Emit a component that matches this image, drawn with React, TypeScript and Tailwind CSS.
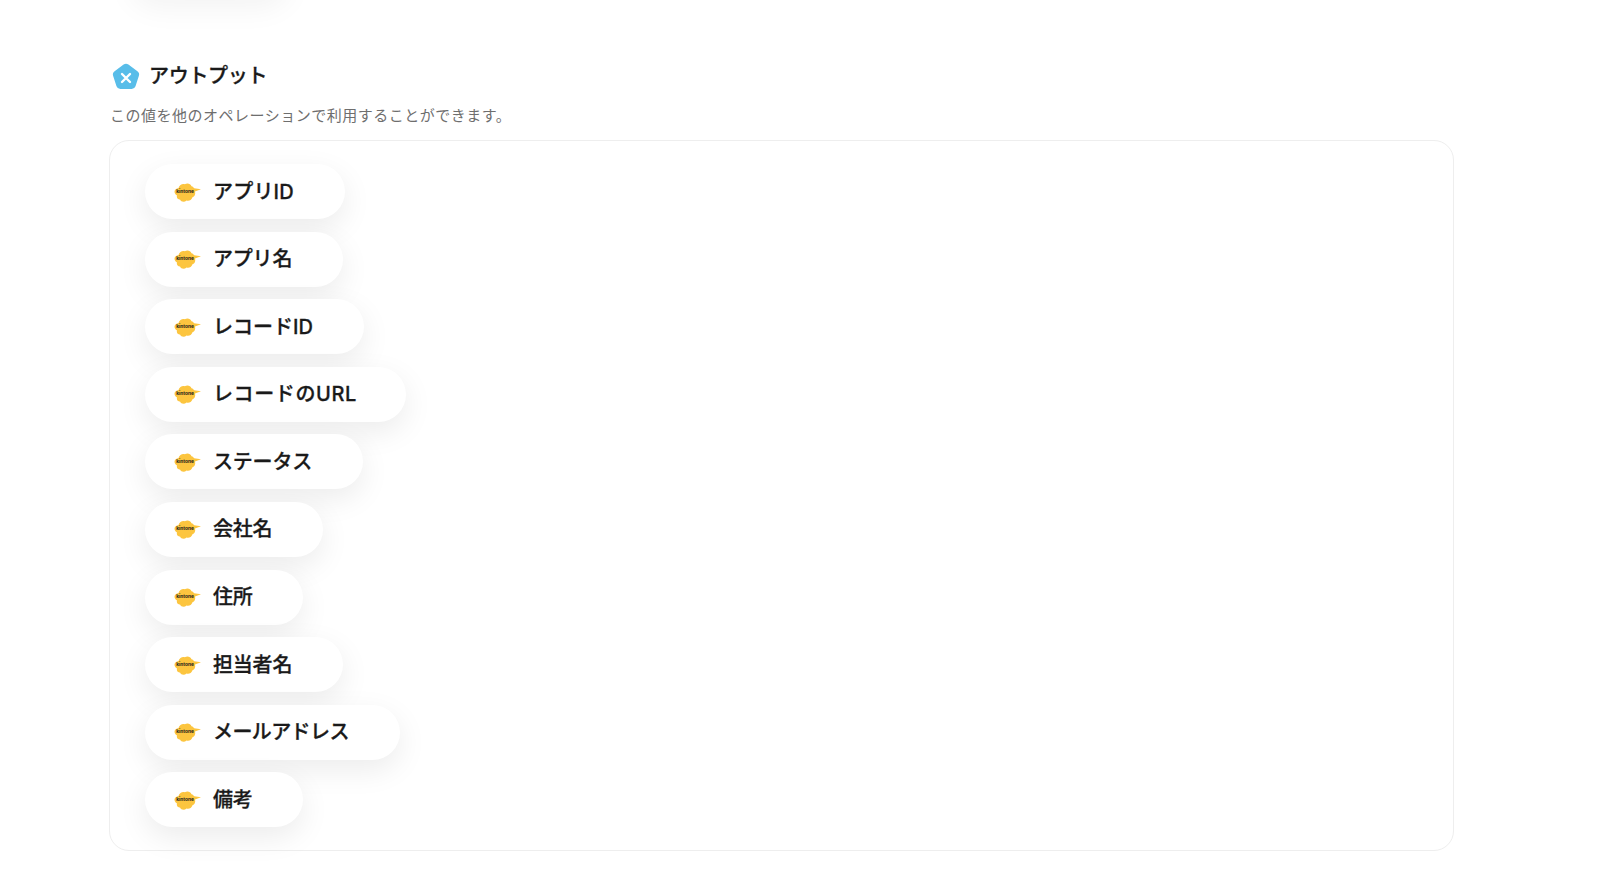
const outputs = [
  { label: "アプリID", width: "w-[200px]", tracking: "tracking-[0.2px]" },
  { label: "アプリ名", width: "w-[198px]", tracking: "tracking-[-0.2px]" },
  { label: "レコードID", width: "w-[219px]", tracking: "tracking-[0px]" },
  { label: "レコードのURL", width: "w-[261px]", tracking: "tracking-[0.6px]" },
  { label: "ステータス", width: "w-[218px]", tracking: "tracking-[-0.2px]" },
  { label: "会社名", width: "w-[178px]", tracking: "tracking-[-0.2px]" },
  { label: "住所", width: "w-[158px]", tracking: "tracking-[-0.2px]" },
  { label: "担当者名", width: "w-[198px]", tracking: "tracking-[-0.2px]" },
  { label: "メールアドレス", width: "w-[255px]", tracking: "tracking-[-0.6px]" },
  { label: "備考", width: "w-[158px]", tracking: "tracking-[-0.2px]" },
];

function KintoneIcon() {
  return (
    <svg width="27" height="22" viewBox="0 0 27 22" className="shrink-0">
      <path
        d="M.5 10.5C.5 8.5 2.5 7.5 4.5 7C5.5 4 8.5 2.3 10.8 3.3C13 1.8 16.5 2.4 17.5 5.2C18.8 5.6 19.6 6.3 20.2 7.3L27 8.2L21 10.6C21.8 13.5 20.5 15.8 18.5 16.3C17.5 19.3 14.5 20.5 12.5 19.5C10.5 21.5 7 21 6 18.5C3.5 18.5 2.4 16.2 3 14.5C1.4 13.5 .5 12.2 .5 10.5Z"
        fill="#fcc53f"
      />
      <text x="11" y="11.6" textAnchor="middle" fontSize="4.8" fontWeight="700" fill="#1a1a1a" fontFamily="Inter, sans-serif">kintone</text>
    </svg>
  );
}

function OutputIcon() {
  return (
    <svg width="30" height="30" viewBox="0 0 30 30" className="shrink-0">
      <path
        d="M12.6 2.6a4 4 0 0 1 4.8 0l9 6.6a4 4 0 0 1 1.5 4.5l-3.4 10.6a4 4 0 0 1-3.8 2.7H9.3a4 4 0 0 1-3.8-2.7L2.1 13.7a4 4 0 0 1 1.5-4.5z"
        fill="#58bde9"
      />
      <path d="M11 12l8 8M19 12l-8 8" stroke="#fff" strokeWidth="2.4" strokeLinecap="round" />
    </svg>
  );
}

function Pill({ label, width, tracking }: { label: string; width: string; tracking: string }) {
  return (
    <div className={`flex items-center h-[55px] pl-[29px] gap-[12px] rounded-full bg-white shadow-[0_10px_30px_rgba(0,0,0,0.08)] ${width}`}>
      <KintoneIcon />
      <span className={`text-[20px] leading-none font-medium [-webkit-text-stroke:0.3px_#1a1a1a] text-[#1a1a1a] whitespace-nowrap ${tracking}`}>{label}</span>
    </div>
  );
}

export default function App() {
  return (
    <div className="h-[879px] overflow-hidden bg-white pl-[109px] pr-[146px] font-['Inter','Noto_Sans_CJK_JP',sans-serif]">
      {/* bottom of the previous block, scrolled off the top */}
      <div className="-mt-[57px] ml-[21px] w-[160px] h-[55px] rounded-full bg-white shadow-[0_10px_30px_rgba(0,0,0,0.05)]" />

      <div className="flex items-center gap-[8px] mt-[64px] ml-[2px] h-[30px]">
        <OutputIcon />
        <h2 className="pb-[2px] text-[20px] leading-none font-medium [-webkit-text-stroke:0.3px_#1a1a1a] tracking-[-0.3px] text-[#1a1a1a]">アウトプット</h2>
      </div>
      <p className="mt-[14px] ml-[1px] text-[15px] leading-[20px] tracking-[0.5px] text-[#6e6e6e]">
        この値を他のオペレーションで利用することができます。
      </p>

      <div className="mt-[14px] h-[711px] rounded-[20px] border border-[#eeeeee] pl-[35px] pt-[23px] flex flex-col gap-[12.6px]">
        {outputs.map((o) => (
          <Pill key={o.label} label={o.label} width={o.width} tracking={o.tracking} />
        ))}
      </div>
    </div>
  );
}
